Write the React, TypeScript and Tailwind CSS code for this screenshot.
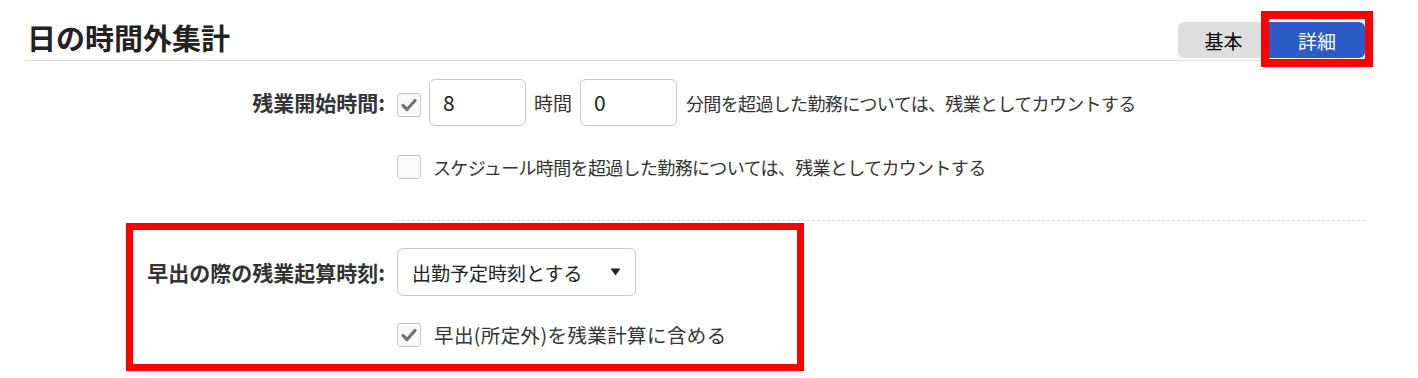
import React from "react";

function Check({ checked }: { checked?: boolean }) {
  return (
    <span className="flex h-[24px] w-[24px] shrink-0 items-center justify-center rounded-[3px] border border-[#c8c8c8] bg-[#fbfbfb]">
      {checked && (
        <svg width="16" height="14" viewBox="0 0 16 14">
          <path
            d="M2 7.5 L6 11.5 L14 2.5"
            fill="none"
            stroke="#737373"
            strokeWidth="3.2"
            strokeLinecap="round"
            strokeLinejoin="round"
          />
        </svg>
      )}
    </span>
  );
}

export default function App() {
  return (
    <div className="relative h-[378px] w-[1418px] overflow-hidden bg-white font-['Noto_Sans_CJK_JP',sans-serif] text-[#333]">
      {/* Header */}
      <div className="ml-[25px] flex h-[61px] w-[1340px] items-end justify-between border-b border-[#dddddd] pb-[2px]">
        <h1 className="mb-[3px] pl-[2px] text-[29px] font-bold leading-[36px] text-[#222]">
          日の時間外集計
        </h1>
        <div className="flex">
          <button className="flex h-[36px] w-[91px] items-center justify-center rounded-l-[6px] bg-[#dedede] text-[19px] leading-none text-black">
            基本
          </button>
          <div className="relative">
            <button className="flex h-[36px] w-[96px] items-center justify-center rounded-r-[6px] bg-[#2a5bc6] text-[19px] leading-none text-white">
              詳細
            </button>
            <div className="pointer-events-none absolute left-[-8px] top-[-11px] h-[56px] w-[112px] border-[8px] border-[#ff0000]" />
          </div>
        </div>
      </div>

      {/* Row 1 */}
      <div className="mt-[18px] flex h-[47px] items-center">
        <div className="w-[385px] text-right text-[21px] font-bold leading-none text-[#333]">
          残業開始時間:
        </div>
        <div className="ml-[12px] flex items-center">
          <div className="mt-[5px]">
            <Check checked />
          </div>
          <div className="ml-[8px] flex h-[47px] w-[97px] items-center rounded-[6px] border border-[#c8c8c8] pl-[13px] text-[21px] text-[#222]">
            8
          </div>
          <span className="mx-[8px] text-[19px] leading-none">時間</span>
          <div className="flex h-[47px] w-[97px] items-center rounded-[6px] border border-[#c8c8c8] pl-[13px] text-[21px] text-[#222]">
            0
          </div>
          <span className="ml-[9px] text-[18px] leading-none tracking-[-0.65px]">
            分間を超過した勤務については、残業としてカウントする
          </span>
        </div>
      </div>

      {/* Row 2 */}
      <div className="ml-[397px] mt-[29px] flex h-[24px] items-center">
        <Check />
        <span className="ml-[12px] text-[18px] leading-none tracking-[-0.65px]">
          スケジュール時間を超過した勤務については、残業としてカウントする
        </span>
      </div>

      {/* Dashed separator */}
      <div className="ml-[397px] mt-[41px] w-[968px] border-t border-dashed border-[#dcdcdc]" />

      {/* Highlighted section */}
      <div className="ml-[126px] mt-[2px] w-[678px] border-[7px] border-[#ff0000] pb-[18px] pt-[18px]">
        <div className="flex h-[48px] items-center">
          <div className="w-[252px] text-right text-[21px] font-bold leading-none text-[#333]">
            早出の際の残業起算時刻:
          </div>
          <div className="ml-[12px] flex h-[48px] w-[239px] items-center justify-between rounded-[6px] border border-[#c8c8c8] pl-[14px] pr-[14px]">
            <span className="text-[19px] leading-none text-[#222]">出勤予定時刻とする</span>
            <svg width="11" height="8" viewBox="0 0 11 8">
              <path d="M0.5 0.5 L10.5 0.5 L5.5 7.5 Z" fill="#222" />
            </svg>
          </div>
        </div>
        <div className="ml-[264px] mt-[27px] flex h-[23px] items-center">
          <Check checked />
          <span className="ml-[13px] text-[19.5px] leading-none tracking-[0.4px]">
            早出(所定外)を残業計算に含める
          </span>
        </div>
      </div>
    </div>
  );
}
